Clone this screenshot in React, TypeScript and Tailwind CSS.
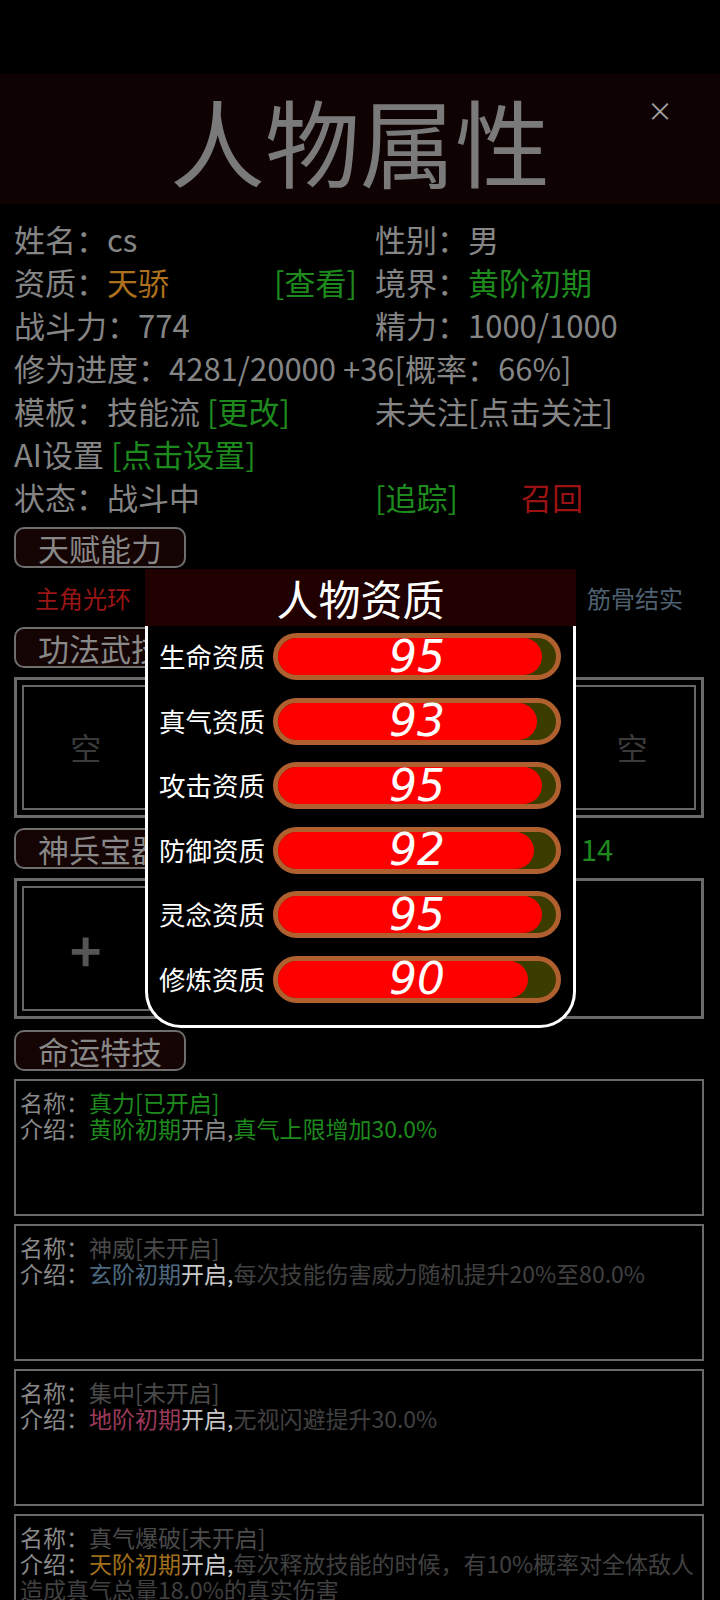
import React from 'react';

const GREEN = 'text-[#1e8a1e]';

interface Aptitude {
  label: string;
  value: number;
}

const aptitudes: Aptitude[] = [
  { label: '生命资质', value: 95 },
  { label: '真气资质', value: 93 },
  { label: '攻击资质', value: 95 },
  { label: '防御资质', value: 92 },
  { label: '灵念资质', value: 95 },
  { label: '修炼资质', value: 90 },
];

const talents = [
  { name: '主角光环', color: 'text-[#9a1515]' },
  { name: '天生神力', color: 'text-[#4e6070]' },
  { name: '过目不忘', color: 'text-[#4e6070]' },
  { name: '灵根深厚', color: 'text-[#4e6070]' },
  { name: '筋骨结实', color: 'text-[#4e6070]' },
];

function SectionButton({ label }: { label: string }) {
  return (
    <div className="flex h-[41px] w-[172px] items-center justify-center rounded-[10px] border-2 border-[#6e6e6e] bg-[#150404] text-[31px] leading-none text-[#888888]">
      {label}
    </div>
  );
}

function Slot({ children }: { children?: React.ReactNode }) {
  return (
    <div className="flex h-[125px] items-center justify-center border-2 border-[#666666]">
      {children}
    </div>
  );
}

function SkillCard({
  name,
  nameColor,
  children,
}: {
  name: string;
  nameColor: string;
  children: React.ReactNode;
}) {
  return (
    <div className="h-[137px] border-2 border-[#6a6a6a] px-[4px] pt-[8px] text-[23px] leading-[26px]">
      <div>
        <span className="text-[#888888]">名称：</span>
        <span className={nameColor}>{name}</span>
      </div>
      <div>
        <span className="text-[#888888]">介绍：</span>
        {children}
      </div>
    </div>
  );
}

function AptitudeBar({ value }: { value: number }) {
  return (
    <div className="relative h-[47px] w-[288px] rounded-full border-[5px] border-[#b0602f] bg-[#3a3c00]">
      <div
        className="h-full rounded-full bg-[#ff0000]"
        style={{ width: `${value}%` }}
      />
      <div className="absolute inset-0 flex items-center justify-center text-[44px] font-light italic leading-none text-white [font-family:'DejaVu_Sans',sans-serif]">
        {value}
      </div>
    </div>
  );
}

export default function App() {
  return (
    <div className="relative min-h-[1600px] w-[720px] overflow-hidden bg-black [font-family:'Noto_Sans_CJK_SC','Noto_Sans',sans-serif]">
      <div className="h-[74px]" />

      {/* header */}
      <div className="relative flex h-[130px] items-center justify-center bg-[#0e0203]">
        <span className="text-[95px] leading-none text-[#7a7a7a]">人物属性</span>
        <span className="absolute right-[47px] top-[23px] flex h-[26px] w-[26px] items-center justify-center text-[26px] leading-none text-[#a0a0a0]">
          ×
        </span>
      </div>

      {/* base info */}
      <div className="grid grid-cols-[361px_1fr] pl-[14px] pr-[16px] pt-[13px] text-[31px] leading-[43px] text-[#858585]">
        <div>姓名：cs</div>
        <div>性别：男</div>

        <div className="flex justify-between pr-[18px]">
          <span>
            资质：<span className="text-[#ad701c]">天骄</span>
          </span>
          <span className={GREEN}>[查看]</span>
        </div>
        <div>
          境界：<span className={GREEN}>黄阶初期</span>
        </div>

        <div>战斗力：774</div>
        <div>精力：1000/1000</div>

        <div className="col-span-2 whitespace-nowrap">修为进度：4281/20000 +36[概率：66%]</div>

        <div>
          模板：技能流 <span className={GREEN}>[更改]</span>
        </div>
        <div>未关注[点击关注]</div>

        <div className="col-span-2">
          AI设置 <span className={GREEN}>[点击设置]</span>
        </div>

        <div>状态：战斗中</div>
        <div>
          <span className={GREEN}>[追踪]</span>
          <span className="ml-[63px] text-[#9b1212]">召回</span>
        </div>
      </div>

      <div className="pl-[14px] pr-[16px] pt-[9px]">
        <SectionButton label="天赋能力" />

        <div className="grid h-[59px] grid-cols-5 items-center text-[24px]">
          {talents.map((t) => (
            <div key={t.name} className={`text-center ${t.color}`}>
              {t.name}
            </div>
          ))}
        </div>

        <SectionButton label="功法武技" />
        <div className="mt-[9px] grid h-[141px] grid-cols-5 gap-[9px] border-[3px] border-[#6a6a6a] p-[5px]">
          {[0, 1, 2, 3, 4].map((i) => (
            <Slot key={i}>
              <span className="text-[31px] text-[#3a3a3a]">空</span>
            </Slot>
          ))}
        </div>

        <div className="mt-[10px] flex items-center">
          <SectionButton label="神兵宝器" />
          <span className={`ml-[395px] text-[29px] leading-none ${GREEN}`}>14</span>
        </div>
        <div className="mt-[9px] grid h-[141px] grid-cols-5 gap-[9px] border-[3px] border-[#6a6a6a] p-[5px]">
          <Slot>
            <span className="text-[54px] font-bold leading-none text-[#555555]">+</span>
          </Slot>
        </div>

        <div className="mt-[11px]">
          <SectionButton label="命运特技" />
        </div>

        <div className="mt-[8px] flex flex-col gap-[8px]">
          <SkillCard name="真力[已开启]" nameColor={GREEN}>
            <span className={GREEN}>黄阶初期</span>
            <span className="text-[#888888]">开启,</span>
            <span className={GREEN}>真气上限增加30.0%</span>
          </SkillCard>

          <SkillCard name="神威[未开启]" nameColor="text-[#4a4a4a]">
            <span className="text-[#4d6a80]">玄阶初期</span>
            <span className="text-[#c8c8c8]">开启,</span>
            <span className="text-[#404040]">每次技能伤害威力随机提升20%至80.0%</span>
          </SkillCard>

          <SkillCard name="集中[未开启]" nameColor="text-[#4a4a4a]">
            <span className="text-[#9a3a5a]">地阶初期</span>
            <span className="text-[#c8c8c8]">开启,</span>
            <span className="text-[#404040]">无视闪避提升30.0%</span>
          </SkillCard>

          <SkillCard name="真气爆破[未开启]" nameColor="text-[#4a4a4a]">
            <span className="text-[#a0701c]">天阶初期</span>
            <span className="text-[#c8c8c8]">开启,</span>
            <span className="text-[#404040]">
              每次释放技能的时候，有10%概率对全体敌人造成真气总量18.0%的真实伤害
            </span>
          </SkillCard>
        </div>
      </div>

      {/* aptitude popup */}
      <div className="absolute left-[145px] top-[569px] w-[431px]">
        <div className="flex h-[57px] items-center justify-center bg-[#200000] text-[42px] leading-none text-white">
          人物资质
        </div>
        <div className="flex flex-col gap-[17.5px] rounded-b-[36px] border-[3px] border-t-0 border-white bg-black pb-[22px] pl-[11px] pr-[12px] pt-[7px]">
          {aptitudes.map((a) => (
            <div key={a.label} className="flex items-center justify-between">
              <span className="text-[26.5px] leading-none text-white">{a.label}</span>
              <AptitudeBar value={a.value} />
            </div>
          ))}
        </div>
      </div>
    </div>
  );
}
